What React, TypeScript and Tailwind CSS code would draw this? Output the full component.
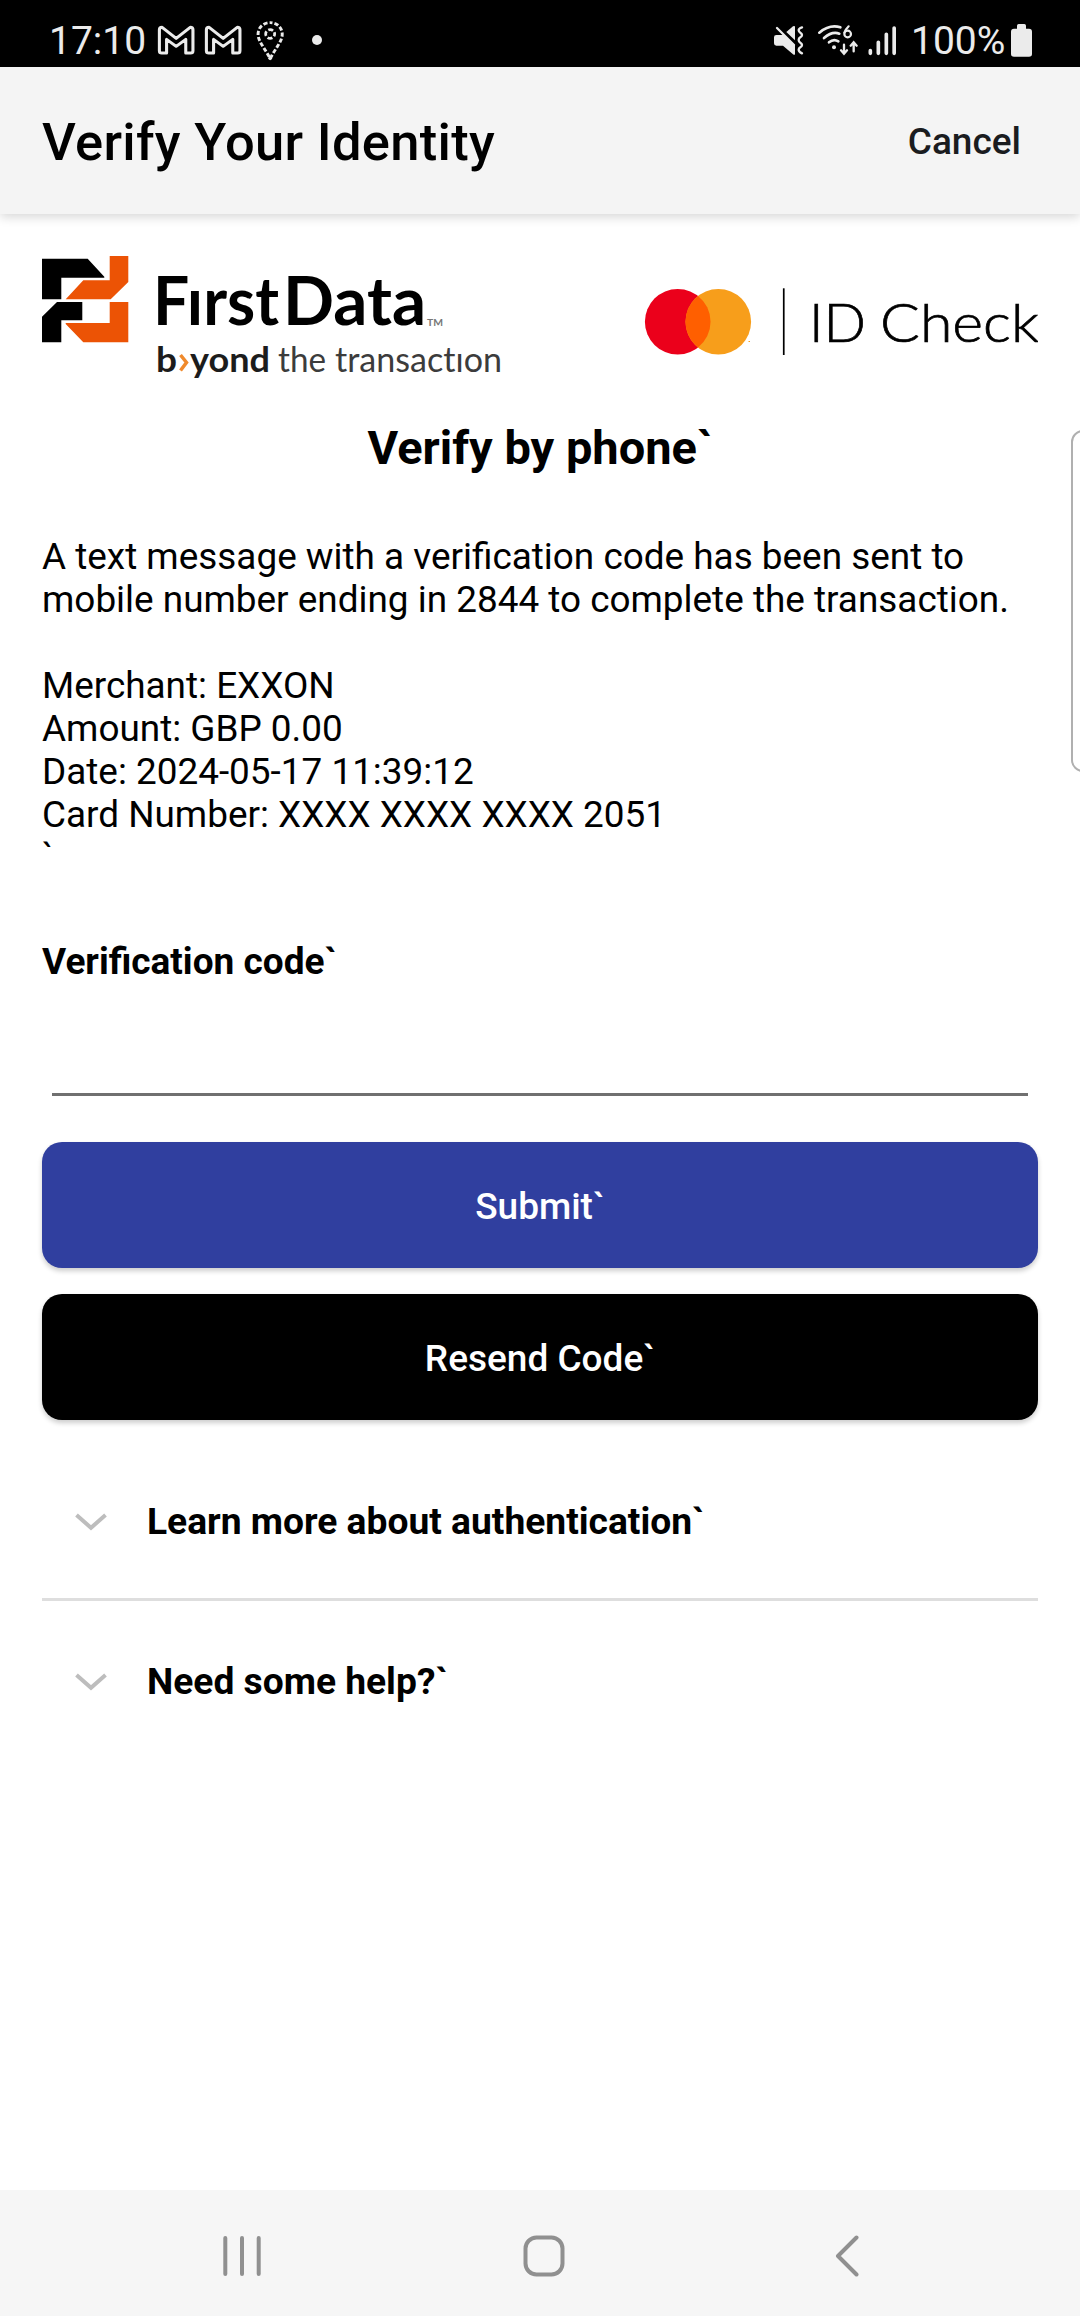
import React from 'react';

const MailGlyph = () => (
  <svg viewBox="457 74 111 90" preserveAspectRatio="none" className="h-[30px] w-[38px]" fill="none" stroke="#ebebeb" strokeWidth="9" strokeLinejoin="round">
    <path d="M464 88q0-7 8-7l41 33 41-33q8 0 8 7v63q0 7-7 7h-14v-41l-28 21-28-21v41h-14q-7 0-7-7z" />
  </svg>
);

const PinGlyph = () => (
  <svg viewBox="744 59 84 123" preserveAspectRatio="none" className="h-[41px] w-[29px]" fill="none" stroke="#ebebeb" strokeWidth="8.5">
    <path d="M785 67c20 0 35 15 35 35 0 22-22 45-35 73-13-28-35-51-35-73 0-20 15-35 35-35z" strokeDasharray="12.5 6" strokeDashoffset="6" />
    <circle cx="785" cy="101" r="13" strokeWidth="8" strokeDasharray="14.5 5.9" strokeDashoffset="7.2" />
    <circle cx="785" cy="174" r="5.5" fill="#ebebeb" stroke="none" />
  </svg>
);

const MuteGlyph = () => (
  <svg viewBox="102 75 90 93" className="h-[31px] w-[30px]" fill="#ebebeb">
    <path d="M139 96l20-17q6-3 6 2v40z" />
    <path d="M109 105h23l33 31v25q0 6-6 2l-30-26h-20q-7 0-7-7v-18q0-7 7-7z" />
    <path d="M111 84l51 51" stroke="#ebebeb" strokeWidth="7" strokeLinecap="round" />
    <path d="M186 82q-10 3-10 9 0 4 5 7t5 7-5 7-5 8 5 8 5 7-5 7-5 7q0 6 10 11" fill="none" stroke="#ebebeb" strokeWidth="7" strokeLinecap="round" />
  </svg>
);

const WifiGlyph = () => (
  <svg viewBox="232 75 126 96" className="h-[32px] w-[42px]" fill="none" stroke="#ebebeb" strokeWidth="8" strokeLinecap="round">
    <path d="M239 101q31-26 63-16" />
    <path d="M253 117q24-21 46-13" />
    <path d="M268 130q14-12 28-3" />
    <circle cx="283" cy="145" r="6" fill="#ebebeb" stroke="none" />
    <path d="M327 82q-10 10-13 19" strokeWidth="6.5" />
    <circle cx="324" cy="105" r="10" strokeWidth="6.5" />
    <path d="M313 137v26m-9-9 9 10 9-10" strokeWidth="7" />
    <path d="M342 157v-26m-9 9 9-10 9 10" strokeWidth="7" />
  </svg>
);

const SignalGlyph = () => (
  <svg viewBox="383 75 87 93" className="h-[31px] w-[29px]" stroke="#ebebeb" strokeWidth="11" strokeLinecap="round">
    <path d="M390 152v8M414 127v33M438 103v57M461.500 84v76" />
  </svg>
);

const BatteryGlyph = () => (
  <svg viewBox="813 72 63 99" className="h-[33px] w-[21px]" fill="#ebebeb">
    <path d="M831 86V77q0-5 5-5h17q5 0 5 5v9h9q9 0 9 9v67q0 8-9 8h-45q-9 0-9-8V95q0-9 9-9z" />
  </svg>
);

const FirstDataLogo = () => (
  <svg viewBox="0 0 460 130" className="h-[130px] w-[460px] overflow-visible [font-variant-ligatures:none]">
    <path fill="#000" d="M0 2.700H45.700L62.300 20.700V21.700H19.300V43.300H0zM15 46H40.300V64.300H19.300V86.300H0V60.700z" />
    <path fill="#ec5305" d="M67.700 0H86.300V26L68.700 43.300H23.700L41.300 24.300H67.700zM67.700 46H86.300V86.300H41.300L23.700 68V67H67.700z" />
    <g fontFamily="Lato, sans-serif">
      <g fontSize="66" fontWeight="700" fill="#000">
        <text x="111" y="69.300" textLength="126" lengthAdjust="spacingAndGlyphs">Fırst</text>
        <text x="241" y="69.300" textLength="143" lengthAdjust="spacingAndGlyphs">Data</text>
      </g>
      <text x="385" y="69.500" fontSize="9" fontWeight="700" fill="#777" textLength="16" lengthAdjust="spacingAndGlyphs">TM</text>
      <g fontSize="34" fontWeight="700" fill="#1c1c1c">
        <text x="114" y="115.500" textLength="21" lengthAdjust="spacingAndGlyphs">b</text>
        <text x="148" y="115.500" textLength="80" lengthAdjust="spacingAndGlyphs">yond</text>
      </g>
      <path d="M138.500 99l6 7.500-6 8" fill="none" stroke="#f08a2c" strokeWidth="3.500" />
      <g fontSize="34" fontWeight="400" fill="#3c3c3c">
        <text x="236" y="115.500" textLength="48" lengthAdjust="spacingAndGlyphs">the</text>
        <text x="293" y="115.500" textLength="167" lengthAdjust="spacingAndGlyphs">transactıon</text>
      </g>
    </g>
  </svg>
);

const IdCheckLogo = () => (
  <svg viewBox="644 286 394 72" className="mt-[2px] h-[72px] w-[394px]">
    <circle cx="677.700" cy="321.700" r="32.800" fill="#eb001b" />
    <circle cx="718.300" cy="321.700" r="32.800" fill="#f79e1b" />
    <path d="M698 295.900a32.800 32.800 0 0 1 0 51.600a32.800 32.800 0 0 1 0-51.600z" fill="#ff5f00" />
    <rect x="748.500" y="341" width="1.500" height="1" fill="#f79e1b" />
    <rect x="782.900" y="288.300" width="1.700" height="66.700" fill="#000" />
    <g fontFamily="Lato, sans-serif" fontSize="53.500" fontWeight="300" fill="#000" stroke="#000" strokeWidth="0.700">
      <text x="809" y="341.700" textLength="57" lengthAdjust="spacingAndGlyphs">ID</text>
      <text x="880" y="341.700" textLength="159" lengthAdjust="spacingAndGlyphs">Check</text>
    </g>
  </svg>
);

const details = [
  'A text message with a verification code has been sent to',
  'mobile number ending in 2844 to complete the transaction.',
  '\u00a0',
  'Merchant: EXXON',
  'Amount: GBP 0.00',
  'Date: 2024-05-17 11:39:12',
  'Card Number: XXXX XXXX XXXX 2051',
  '`',
];

const HelpRow = ({ title }: { title: string }) => (
  <button className="flex h-[157px] w-full items-center pt-[4px] text-left">
    <svg viewBox="0 0 32 18" className="ml-[33px] h-[18px] w-[32px]" fill="none" stroke="#bdbdbd" strokeWidth="4">
      <path d="M1.500 2 16 14.800 30.500 2" />
    </svg>
    <span className="ml-[40px] text-[37.2px] leading-[43px] font-bold">{title}</span>
  </button>
);

export default function App() {
  return (
    <div className="relative flex h-[2316px] w-[1080px] flex-col overflow-hidden bg-white font-['Roboto',sans-serif] text-black">
      <div className="flex h-[67px] shrink-0 items-center bg-black pt-[13px] text-[#ebebeb]">
        <span className="ml-[49px] w-[108px] pt-[1px] text-[39px] leading-[46px] whitespace-nowrap">17:10</span>
        <MailGlyph />
        <span className="w-[9px]" />
        <MailGlyph />
        <span className="w-[14px]" />
        <PinGlyph />
        <span className="ml-[27px] size-[10px] rounded-full bg-[#ebebeb]" />
        <div className="mr-[48px] ml-auto flex items-center">
          <MuteGlyph />
          <span className="w-[13px]" />
          <WifiGlyph />
          <span className="w-[9px]" />
          <SignalGlyph />
          <span className="ml-[14px] w-[100px] pt-[1px] text-[39px] leading-[46px] whitespace-nowrap">100%</span>
          <BatteryGlyph />
        </div>
      </div>

      <header className="z-10 flex h-[147px] shrink-0 items-center justify-between bg-[#f4f4f4] pt-[2px] pr-[59px] pl-[42px] shadow-[0_3px_10px_rgba(0,0,0,0.16)]">
        <h1 className="text-[52.5px] leading-[62px] font-medium tracking-[0.3px]">Verify Your Identity</h1>
        <button className="text-[37px] leading-[43px] font-medium text-[#1a1c1f]">Cancel</button>
      </header>

      <main className="flex grow flex-col px-[42px] pt-[42px]">
        <div className="flex h-[130px] items-center justify-between">
          <FirstDataLogo />
          <IdCheckLogo />
        </div>
        <h2 className="mt-[34px] text-center text-[47px] leading-[55px] font-bold">Verify by phone`</h2>
        <div className="mt-[60px] text-[36.9px] leading-[43px] whitespace-nowrap">
          {details.map((line, i) => (
            <p key={i}>{line}</p>
          ))}
        </div>
        <label className="mt-[61px] text-[37px] leading-[43px] font-bold">Verification code`</label>
        <div className="mx-[10px] mt-[110px] h-[3px] bg-[#707070]" />
        <button className="mt-[46px] h-[126px] rounded-[20px] bg-[#303f9f] pt-[4px] text-[37px] font-medium text-white shadow-[0_3px_5px_rgba(0,0,0,0.2)]">
          Submit`
        </button>
        <button className="mt-[26px] h-[126px] rounded-[20px] bg-black pt-[4px] text-[37px] font-medium text-white shadow-[0_3px_5px_rgba(0,0,0,0.2)]">
          Resend Code`
        </button>
        <div className="mt-[21px]">
          <HelpRow title="Learn more about authentication`" />
          <div className="h-[3px] bg-[#dedede]" />
          <HelpRow title="Need some help?`" />
        </div>
      </main>

      <nav className="flex h-[126px] shrink-0 items-center bg-[#f6f6f6] pt-[6px]">
        <svg viewBox="0 0 40 42" className="ml-[222px] h-[42px] w-[40px]" stroke="#909090" strokeWidth="4" strokeLinecap="round">
          <path d="M3.300 3v36M20 3v36M36.700 3v36" />
        </svg>
        <svg viewBox="0 0 42 42" className="ml-[261px] h-[42px] w-[42px]" fill="none" stroke="#909090" strokeWidth="4">
          <rect x="2.500" y="2.500" width="37" height="37" rx="11" />
        </svg>
        <svg viewBox="0 0 24 42" className="ml-[270px] h-[42px] w-[24px]" fill="none" stroke="#909090" strokeWidth="4" strokeLinecap="round" strokeLinejoin="round">
          <path d="M21.500 2.500 3 21l18.500 18.500" />
        </svg>
      </nav>

      <div className="absolute top-[430px] -right-[10px] h-[342px] w-[19px] rounded-l-[12px] border-2 border-[#b0b0b0] bg-white" />
    </div>
  );
}
